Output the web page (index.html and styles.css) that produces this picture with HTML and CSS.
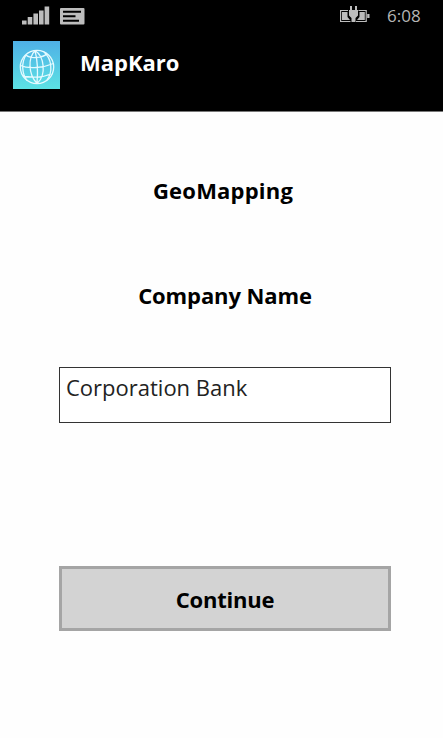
FILE: index.html
```html
<!DOCTYPE html>
<html lang="en">
<head>
  <meta charset="UTF-8" />
  <meta name="viewport" content="width=device-width, initial-scale=1.0" />
  <title>MapKaro</title>
  <link rel="stylesheet" href="styles.css">
</head>
<body>

  <header class="header">
    <!-- Phone status bar -->
    <div class="status-bar">
      <svg class="signal" width="28" height="19" viewBox="0 0 28 19">
        <path d="M0 14.500h4.600V18.500H0zM5.700 11h4.600v7.500H5.700zM11.400 7.500H16v11h-4.600zM17 4.500h4.600v14H17zM22.600 0.500h4.600v18h-4.600z" />
      </svg>
      <svg class="message" width="25" height="17" viewBox="0 0 25 17">
        <rect width="24.500" height="16.500" rx="1" />
        <path d="M3 3.700h18M3 8.200h12.500M3 12.700h16" />
      </svg>
      <svg class="battery" width="30" height="18" viewBox="0 0 30 18">
        <path class="cell" d="M8 4.500H0.600V15.500H10.500M18.500 4.500H26.200V15.500H16" />
        <path d="M2 6h5.500v5l2.500 3H2zM24.800 6h-5.300v5l-2.500 3h7.800zM27.200 8h2.300v4h-2.300z" />
        <path d="M10 0h2v4h-2zM15 0h2v4h-2zM9 4h9v5.500L15.500 12v4h-4v-4L9 9.500z" />
      </svg>
      <span class="clock">6:08</span>
    </div>

    <!-- App title -->
    <div class="title-bar">
      <div class="logo">
        <svg width="36" height="36" viewBox="0 0 36 36">
          <circle cx="18" cy="18" r="16.700" />
          <path d="M16 1.500C9 9 9 25 18 34.500M16 1.500C25 7 28 26 18 34.500M16 1.500C18.500 11 19 23 18 34.500M7 6C11 10 24 9 28 4.800M1.500 16.500C10 20.500 25 18.500 34.500 14.500M4 27C12 29 24 28.500 32 25M7 6C2 14 3 25 8 31.500M25 3C33 10 34 23 28 31" />
        </svg>
      </div>
      <h1 class="app-name">MapKaro</h1>
    </div>
  </header>

  <!-- Company form -->
  <main class="content">
    <h2 class="heading">GeoMapping</h2>
    <form class="form">
      <label class="label" for="company-input">Company Name</label>
      <input id="company-input" class="input" type="text" value="Corporation Bank" />
      <button class="continue-button" type="button">Continue</button>
    </form>
  </main>

</body>
</html>
```

FILE: styles.css
```css
* {
  box-sizing: border-box;
}

body {
  margin: 0;
  height: 100vh;
  background: #fefefe;
  color: #000;
  font-family: "Open Sans", "Noto Sans", sans-serif;
  overflow: hidden;
}

/* Header */
.header {
  height: 112px;
  background: #000;
  border-bottom: 1px solid #777;
}

.status-bar {
  display: flex;
  align-items: flex-start;
  height: 41px;
  padding: 6px 22px 0;
  fill: #bdbdbd;
}

.message {
  margin: 2px 0 0 10px;
}

.message path {
  fill: none;
  stroke: #000;
  stroke-width: 2;
}

.battery {
  margin-left: auto;
}

.battery .cell {
  fill: none;
  stroke: #bdbdbd;
  stroke-width: 1.2;
}

.clock {
  width: 34px;
  margin-left: 17px;
  color: #b5b5b5;
  font-size: 17px;
  line-height: 20px;
  white-space: nowrap;
}

.title-bar {
  display: flex;
  padding-left: 13px;
}

.logo {
  display: flex;
  width: 47px;
  height: 48px;
  padding: 8px 0 0 6px;
  background: linear-gradient(#4fb0e6, #5ce2e4);
}

.logo svg {
  fill: none;
  stroke: #e4faff;
  stroke-width: 1.3;
}

.app-name {
  margin: 6px 0 0 20px;
  color: #fff;
  font-size: 22px;
  line-height: 30px;
}

/* Form */
.content {
  padding: 63px 52px 0 59px;
}

.heading {
  margin: 0;
  padding-right: 4px;
  font-size: 22px;
  letter-spacing: 0.2px;
  line-height: 30px;
  text-align: center;
}

.form {
  display: flex;
  flex-direction: column;
}

.label {
  margin-top: 75px;
  font-size: 22px;
  font-weight: 700;
  letter-spacing: -0.1px;
  line-height: 30px;
  text-align: center;
}

.input {
  height: 56px;
  margin-top: 57px;
  padding: 0 6px 17px;
  border: 1px solid #333;
  background: #fff;
  color: #222;
  font-family: inherit;
  font-size: 22px;
  outline: none;
}

.continue-button {
  height: 65px;
  margin-top: 143px;
  padding: 0;
  border: 3px solid #a5a5a5;
  background: #d3d3d3;
  color: #000;
  font-family: inherit;
  font-size: 22px;
  font-weight: 700;
  letter-spacing: -0.2px;
}
```
